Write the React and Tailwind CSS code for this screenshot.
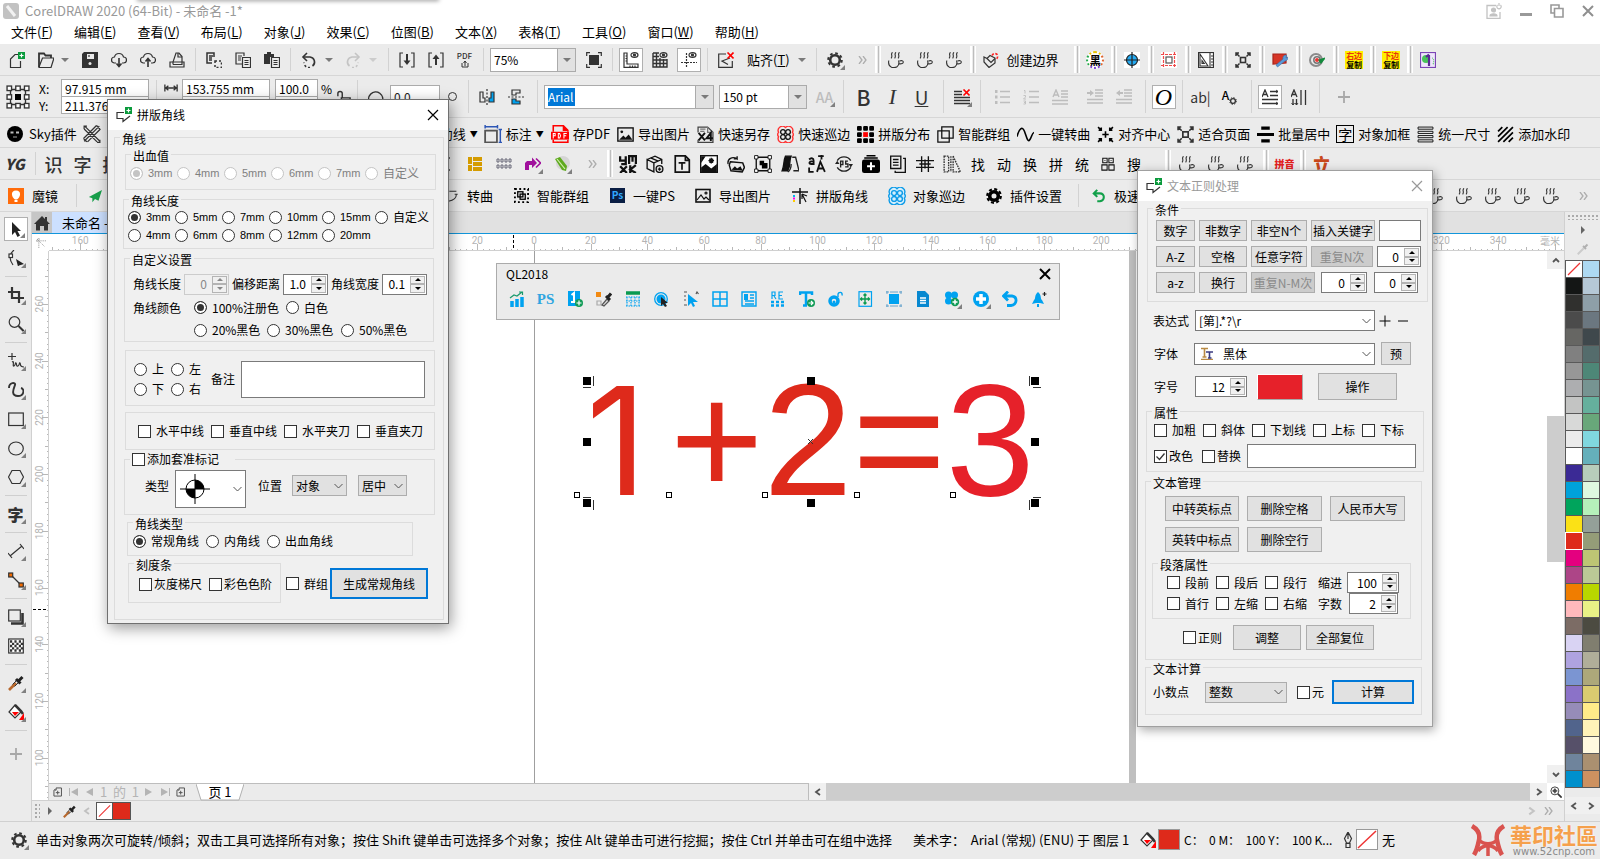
import React, { useState } from 'react';

const DARK = '#333333';
const BLUE = '#00a2f0';

/* 16x16 drawings, stroked by default */
const ICONS = {
  newDoc: <><path d="M9 2.500H6L1.500 7v8.500h10V9" /><rect x="9" y="0" width="7" height="7" fill="#0a9a3c" stroke="none" /><path d="M12.500 1.500v4M10.500 3.500h4" stroke="#fff" /></>,
  open: <><path d="M1 15V1.500h5l1.500 2H13V6" strokeWidth="1.800" /><path d="M1 15L4.500 6H16l-3 9.500H1z" /></>,
  save: <><path d="M0 2l2-2h14v16H0z" fill={DARK} stroke="none" /><rect x="5" y="2" width="7" height="5" fill="#ebebeb" stroke="none" /><path d="M7 3v2" /><circle cx="8" cy="11.500" r="1.500" fill="#ebebeb" stroke="none" /></>,
  cloudDown: <><path d="M5 11H3.500a3 3 0 0 1 0-6C4 2.500 6 1.500 8 1.500S12 3 12.500 5a3 3 0 0 1 0 6H11" /><path d="M8 6v8M5.500 11.500L8 14.500l2.500-3" strokeWidth="1.600" /></>,
  cloudUp: <><path d="M5 11H3.500a3 3 0 0 1 0-6C4 2.500 6 1.500 8 1.500S12 3 12.500 5a3 3 0 0 1 0 6H11" /><path d="M8 7v8M5.500 9.500L8 6.500l2.500 3" strokeWidth="1.600" /></>,
  print: <><path d="M1 10v5h14v-5z" /><path d="M4 12.500h9V4.500L10 1H7L4 10v2.500" /><path d="M9 1v4h4" /></>,
  cut: <><path d="M6 11H1V1h7v4M3 4h4M3 6h3M3 8h3" strokeWidth="1.500" /><path d="M9 9h6.500v6.500H9z" strokeDasharray="2 2" strokeWidth="1.500" /></>,
  copy: <><path d="M7 12H1V1h8v3M3 4h4M3 6h3M3 8h3" /><path d="M7.500 5.500h8v10h-8zM9.500 8.500h4M9.500 10.500h4M9.500 12.500h4" /></>,
  paste: <><path d="M0 2h3V0h4v2h3v3H6v7H0z" fill={DARK} stroke="none" /><path d="M7.500 5.500h8v10h-8zM9.500 8.500h4M9.500 10.500h4M9.500 12.500h4" /></>,
  undo: <><path d="M3 5h6a5 5 0 0 1 2.500 9" strokeWidth="1.600" /><path d="M6 1L2 5l4 4" strokeWidth="1.600" /><path d="M9 15.500a5 5 0 0 1-6-5" strokeDasharray="2 2" strokeWidth="1.600" /></>,
  redo: <g stroke="#c4c4c4"><path d="M13 5H7a5 5 0 0 0-2.500 9" strokeWidth="1.600" /><path d="M10 1l4 4-4 4" strokeWidth="1.600" /><path d="M7 15.500a5 5 0 0 0 6-5" strokeDasharray="2 2" strokeWidth="1.600" /></g>,
  import: <><path d="M4 1H1v14h3M12 1h3v14h-3" /><path d="M8 2v9" strokeWidth="2" /><path d="M4.500 8.500h7L8 13z" fill={DARK} stroke="none" /></>,
  export: <><path d="M4 1H1v14h3M12 1h3v14h-3" /><path d="M8 5v8" strokeWidth="2" /><path d="M4.500 7h7L8 2.500z" fill={DARK} stroke="none" /></>,
  fit: <><rect x="3" y="3" width="10" height="10" fill={DARK} stroke="none" /><path d="M.7 4V.7H4M12 .7h3.300V4M15.300 12v3.300H12M4 15.300H.7V12" /></>,
  rulers: <><path d="M1 1h3v11h11v3.300H1z" /><path d="M2.500 4H4M2.500 6.500H4M2.500 9H4M7 13.500v2M9.500 13.500v2M12 13.500v2" /><ellipse cx="11.500" cy="3" rx="3.500" ry="2.300" /><circle cx="11.500" cy="3" r="1" fill={DARK} /></>,
  grid: <><path d="M1 1v14h14V7M1 1h6M1 4.500h6M1 8h14M1 11.500h14M4.500 1v14M8 6v9M11.500 7v8" strokeWidth="1.400" /><ellipse cx="11.500" cy="3" rx="3.500" ry="2.300" /><circle cx="11.500" cy="3" r="1" fill={DARK} /></>,
  guides: <><path d="M0 10.500h16M5.500 1v15" strokeDasharray="2 1" /><ellipse cx="11.500" cy="3" rx="3.500" ry="2.300" /><circle cx="11.500" cy="3" r="1" fill={DARK} /></>,
  snapOff: <><path d="M8 2H.7v13.300h13.600V9M12 6L4 9l6 3.500" /><path d="M9.500 .5l6 6M15.500 .5l-6 6" stroke="#f00" strokeWidth="1.600" /></>,
  gear: <><circle cx="8" cy="8" r="4.800" strokeWidth="2.600" /><circle cx="8" cy="8" r="6.800" strokeWidth="2" strokeDasharray="2.670 2.670" /></>,
  gearBold: <g stroke="#000"><circle cx="8" cy="8" r="4.300" strokeWidth="3.600" /><circle cx="8" cy="8" r="6.800" strokeWidth="2.200" strokeDasharray="3 2.340" /></g>,
  cup: <g strokeWidth="1.100"><path d="M4.500 .3c-2.500 2.400 .8 3.200-1.400 6M8 .3c-2.500 2.400 .8 3.200-1.400 6M11.500 .3c-2.500 2.400 .8 3.200-1.400 6" /><path d="M.8 8.500c-.4 2 0 5.500 2.700 6.700 2 .6 4 .5 5.500-.4 1.600-1.200 2-3 2-4.800M10.500 8.500c.5 1.500 .5 2.500 .2 3.500M11.500 9c2-.8 3.800-.4 3.800 1s-1.600 2.200-4.300 1.800" /></g>,
  boundary: <><path d="M4 6.500L1 5v5l5 5.500 6-4.500V6L7 3.500z" /><path d="M4 6.500l4 4 4-4" /><path d="M9 3.500C10 1.500 12 1 13.500 2s1.500 3.500 0 5" stroke="#f22" strokeDasharray="2.500 1.500" strokeWidth="1.600" /></>,
  target: <><rect width="16" height="16" fill="#fff" stroke="none" /><circle cx="8" cy="8" r="5.500" fill="#24aaf2" stroke="#222" /><path d="M0 8h16M8 0v16" stroke="#222" /></>,
  cropMarks: <><rect width="16" height="16" fill="#fff" stroke="none" /><path d="M2.500 0v16M13.500 0v16M0 2.500h16M0 13.500h16" stroke="#f04a4a" strokeDasharray="3 1" /><rect x="5" y="5" width="6" height="6" stroke="#555" /></>,
  measure: <><rect x=".5" y=".5" width="15" height="15" fill="#fff" stroke="#333" /><path d="M2 2l8 12H2zM4 8.500v3h2.300zM12 1v14M13 4h2M13 7h2M13 10h2M13 13h2" strokeWidth="1.100" /></>,
  fitPage: <><rect x="5.500" y="5.500" width="5" height="5" strokeWidth="1.600" /><path d="M1 4V1h3M1 1l3.500 3.500M12 1h3v3M15 1l-3.500 3.500M15 12v3h-3M15 15l-3.500-3.500M4 15H1v-3M1 15l3.500-3.500" strokeWidth="1.500" /></>,
  redTool: <><path d="M1 2h13v9l-13 1z" fill="#d63527" stroke="#a8231a" /><path d="M14.500 3c-3 0-4 2-3.500 4l-7 6 1.500 2 7.500-6c2 0 3-2 3-4l-2 1z" fill="#5b9ad8" stroke="#3a6ea5" strokeWidth=".6" /></>,
  spiral: <><circle cx="7" cy="8" r="6" stroke="#8b8b8b" strokeWidth="2" /><circle cx="8" cy="8" r="3.200" stroke="#777" strokeWidth="1.500" fill="#fff" /><circle cx="8" cy="8" r="2" fill="#e33" stroke="none" /><path d="M16 6l-6 2 2 3z" fill="#128a3c" stroke="#128a3c" /></>,
  ps1: <><rect x=".5" y=".5" width="15" height="15" fill="#efe6fb" stroke="#7b45b5" /><ellipse cx="6" cy="7" rx="4" ry="4" fill="#49c35a" stroke="none" /><path d="M9 3v11M6 5l3-2.500" stroke="#5a2a94" strokeWidth="2.200" /><path d="M12 6c2 0 2 4 1 7" stroke="#58c768" strokeDasharray="1 1" /></>,
  origin: <><path d="M3 3h10v10H3z" strokeWidth=".9" /><g fill="#fff" strokeWidth=".9"><rect x=".7" y=".7" width="3" height="3" /><rect x="6.500" y=".7" width="3" height="3" /><rect x="12.300" y=".7" width="3" height="3" /><rect x=".7" y="6.500" width="3" height="3" /><rect x="12.300" y="6.500" width="3" height="3" /><rect x=".7" y="12.300" width="3" height="3" /><rect x="6.500" y="12.300" width="3" height="3" /><rect x="12.300" y="12.300" width="3" height="3" /></g><rect x="6" y="6" width="4" height="4" fill="#000" stroke="none" /></>,
  widthArrow: <path d="M1 4v8M15 4v8M2 8h12M5 5.500L2 8l3 2.500M11 5.500L14 8l-3 2.500" strokeWidth="1.500" />,
  lock: <path d="M1 7V4c0-3 5-3 5 0v5M5 9h10v6H5z" strokeWidth="1.600" />,
  rotate: <path d="M2 14A7 7 0 1 1 14 13M0 9l2 5 4-3" strokeWidth="1.500" />,
  mirrorH: <><path d="M1 3h3v6h2v4H1z" /><path d="M8 0v16" strokeDasharray="2 1.500" /><path d="M15 3h-3v6h-2v4h5z" fill={BLUE} /></>,
  mirrorV: <><path d="M12 1H4v5h4V4h4z" /><path d="M0 8h16" strokeDasharray="2 1.500" /><path d="M12 15H4v-5h4v2h4z" fill={BLUE} /></>,
  alignOff: <><path d="M0 2.500h8M0 5.500h8M0 8.500h16M0 11.500h16M0 14.500h16" strokeWidth="1.500" /><path d="M9.500 .5l6 6M15.500 .5l-6 6" stroke="#f00" strokeWidth="1.600" /></>,
  bullets: <g stroke="#bdbdbd"><path d="M6 2.500h10M6 8h10M6 13.500h10" strokeWidth="1.500" /><path d="M1 2.500h2.500M1 8h2.500M1 13.500h2.500" strokeWidth="2.800" /></g>,
  numbers: <g stroke="#bdbdbd"><path d="M6 2.500h10M6 8h10M6 13.500h10" strokeWidth="1.500" /><path d="M1 1.500h1v3M.5 6.500h2v1.500l-2 2h2.500M.5 12h2v3h-2M1 13.500h1.500" strokeWidth=".9" /></g>,
  dropCap: <g stroke="#bdbdbd"><path d="M1 8L4 1l3 7M2 6h4M9 2h7M9 5h7M9 8h7M0 11.500h16M0 15h16" strokeWidth="1.400" /></g>,
  indentIn: <g stroke="#bdbdbd"><path d="M8 1h8M8 4h8M8 7h8M0 10.500h16M0 14h16" strokeWidth="1.600" /><path d="M0 3h3V1l4 3-4 3V5H0z" fill="#bdbdbd" stroke="none" /></g>,
  indentOut: <g stroke="#bdbdbd"><path d="M8 1h8M8 4h8M8 7h8M0 10.500h16M0 14h16" strokeWidth="1.600" /><path d="M7 3H4V1L0 4l4 3V5h3z" fill="#bdbdbd" stroke="none" /></g>,
  horizText: <><path d="M0 8L3 1l3 7M1.200 5.500h3.600M8 2.500h8M8 6.500h8M0 10.500h16M0 14.500h16" strokeWidth="1.300" /><path d="M14 1l2 1.500L14 4M14 13l2 1.500-2 1.500" strokeWidth=".9" /></>,
  vertText: <><path d="M0 8L3 1l3 7M1.200 5.500h3.600M2 10v6M5.500 10v6M10 1v15M14.500 1v15" strokeWidth="1.300" /><path d="M.5 14l1.500 2 1.500-2M4 14l1.500 2L7 14" strokeWidth=".9" /></>,
  plus: <path d="M8 2v12M2 8h12" stroke="#a8a8a8" strokeWidth="1.800" />,
  face: <><circle cx="8" cy="8" r="8" fill="#000" stroke="none" /><rect x="3.500" y="5.500" width="3" height="2" fill="#bbb" stroke="none" /><rect x="9" y="5.500" width="3" height="2" fill="#bbb" stroke="none" /><path d="M6 11h4" stroke="#888" /></>,
  tools: <path d="M1.500 1L15 14.500M1 3.500L12.500 15M1 3.500V1h2.500M12.500 15.500H15V13M14.500 1L1 14.500M12 .5L.5 12M.5 12l3 3M12 .5l3 3M15.500 3.500L4 15" strokeWidth="1.100" />,
  dimension: <><path d="M1 1.500h11M1 0v3M12 0v3M14.500 4v12M13 4h3M13 15.500h3" stroke="#2d56b5" strokeWidth="1.300" /><rect x="1" y="5" width="10.500" height="10.500" stroke="#555" strokeWidth="1.600" /></>,
  pdf: <><path d="M2 6V.7h9l4 4V6M2 13v2.300h13V13" stroke="#f00" strokeWidth="1.400" /><path d="M11 .7v4h4" fill="#f00" stroke="#f00" /><rect x="0" y="6" width="16" height="7" fill="#f00" stroke="none" /><path d="M2 12V7.500h1.700v2H2M6.500 7.500v4h1.200l.8-2-.8-2zM11.500 12V7.500H14M11.500 9.500h2" stroke="#fff" strokeWidth=".9" /></>,
  picture: <><rect x=".8" y="1.800" width="14.400" height="12.400" stroke="#111" strokeWidth="1.300" /><circle cx="4.500" cy="5.500" r="1.300" fill="#111" stroke="none" /><path d="M2 13l4-4 2 2 3-3 3.500 5z" fill="#111" stroke="none" /></>,
  x4: <><path d="M1 6V1h9l5 5v9.500H1V13" stroke="#444" /><path d="M3 3h5M3 5h4M10 1v5h5" stroke="#777" /><path d="M1.500 6.500l6 7M7.500 6.500l-6 7M13 14V6.500L9 11.500h6" stroke="#111" strokeWidth="1.800" /></>,
  clover: <><path d="M8 1.500a4 4 0 0 1 6.500 4.500 3 3 0 0 1 0 4A4 4 0 0 1 8 14.500 4 4 0 0 1 1.500 10a3 3 0 0 1 0-4A4 4 0 0 1 8 1.500z" stroke="#f33" strokeWidth="1.300" /><g stroke="#111" strokeWidth="1.200"><circle cx="5.600" cy="5.600" r="2.200" /><circle cx="10.400" cy="5.600" r="2.200" /><circle cx="5.600" cy="10.400" r="2.200" /><circle cx="10.400" cy="10.400" r="2.200" /></g></>,
  cloverBlue: <g stroke="#0d9be8" strokeWidth="1.200"><path d="M8 1.500a4 4 0 0 1 6.500 4.500 3 3 0 0 1 0 4A4 4 0 0 1 8 14.500 4 4 0 0 1 1.500 10a3 3 0 0 1 0-4A4 4 0 0 1 8 1.500z" fill="#d5effc" /><circle cx="5.400" cy="5.400" r="2.200" /><circle cx="10.600" cy="5.400" r="2.200" /><circle cx="5.400" cy="10.600" r="2.200" /><circle cx="10.600" cy="10.600" r="2.200" /></g>,
  dots9: <g stroke="none" fill="#000"><rect x="0" y="0" width="4.500" height="4.500" rx="1" /><rect x="5.800" y="0" width="4.500" height="4.500" rx="1" /><rect x="11.500" y="0" width="4.500" height="4.500" rx="1" /><rect x="0" y="5.800" width="4.500" height="4.500" rx="1" /><rect x="5.800" y="5.800" width="4.500" height="4.500" fill="#f00" /><rect x="11.500" y="5.800" width="4.500" height="4.500" rx="1" /><rect x="0" y="11.500" width="4.500" height="4.500" rx="1" /><rect x="5.800" y="11.500" width="4.500" height="4.500" rx="1" /><rect x="11.500" y="11.500" width="4.500" height="4.500" rx="1" /></g>,
  group: <path d="M4.500 .8h10.700v10.700H4.500zM.8 4.500h10.700v10.700H.8z" stroke="#111" />,
  wave: <path d="M0 10C2 2 5 0 7 5s3 11 5 8 2-6 4-7" stroke="#000" strokeWidth="1.500" />,
  center: <path d="M8 5v6M5 8h6M1 1l3 3M4 1.500V4H1.500M15 1l-3 3M12 1.500V4h2.500M1 15l3-3M1.500 12H4v2.500M15 15l-3-3M12 14.500V12h2.500" stroke="#000" strokeWidth="1.500" />,
  batch: <path d="M4 2h8M0 8h16M4 14h8" stroke="#000" strokeWidth="3" />,
  lines4: <path d="M1 1h14v2H1zM1 5h14v2H1zM1 9h14v2H1zM1 13h14v2H1z" stroke="#111" strokeWidth=".9" />,
  hatch: <path d="M1 5l4-4M1 10l9-9M1 15L15 1M6 15l9-9M11 15l4-4" stroke="#000" strokeWidth="1.600" />,
  spacing: <path d="M0 2h12M0 14h12M6 4v8M4 6l2-2 2 2M4 10l2 2 2-2" stroke="#444" strokeWidth="1.500" />,
  yellowGrid: <g fill="#d49b00" stroke="none"><rect x="1" y="1" width="4" height="7" /><rect x="1" y="9" width="4" height="6" /><rect x="6" y="1" width="9" height="4" /><rect x="6" y="6" width="9" height="4" /><rect x="6" y="11" width="9" height="4" /></g>,
  smallGrid: <path d="M1 3h2v3H1zM5 3h2v3H5zM9 3h2v3H9zM13 3h2v3h-2zM1 9h2v3H1zM5 9h2v3H5zM9 9h2v3H9zM13 9h2v3h-2z" stroke="#667" strokeWidth="1" />,
  purpleArrow: <><path d="M0 14V7l2-2h5V1.500L12 7l-5 5V9H4v5z" fill="#a0109c" stroke="none" /><path d="M11 2.500L15.500 7 11 11.500" stroke="#a0109c" strokeWidth="1.600" /></>,
  corel: <><circle cx="9" cy="7" r="7" fill="#d5d5d5" stroke="none" /><path d="M1 3l5-2 7 9-1 5-4-1z" fill="#5eaa1e" stroke="none" /><path d="M3 3l8 10" stroke="#d7f0b5" strokeWidth="1.200" /></>,
  ymxk: <path d="M1 1v4h5M6 1v7H2M9 8V1h6v7M12 1v5M1 10l6 6M7 10l-6 6M10 9v7M15 9l-5 4 5 3" stroke="#111" strokeWidth="2" />,
  box: <><path d="M1 4l7-3 6 3v4M1 4v8l6 3V7zM7 7l7-3M4 2.500l7 3" stroke="#111" /><circle cx="12" cy="12.500" r="3" stroke="#111" /><path d="M12 11v3M10.500 12.500h3" stroke="#111" /></>,
  docT: <path d="M2 .8h9l3.500 3.500v11H2zM11 .8v4h3M5 7h6M8 7v6" stroke="#111" strokeWidth="1.500" />,
  night: <><rect x=".6" y=".6" width="14.800" height="14.800" fill="#fff" stroke="#111" /><path d="M1 15V11l4-3 5 4 5-4v7zM1 1h4L1 7z" fill="#111" stroke="none" /><path d="M10 2.500v5M7.500 5h5M8.300 3.300l3.400 3.400M11.700 3.300L8.300 6.700" stroke="#111" /></>,
  rotatePic: <><path d="M3 6l11 1 1.500 4-2 4-10-1-1.500-5z" stroke="#111" strokeWidth="1.300" /><path d="M4 13l3-3 2 2 3-2 2 4z" fill="#111" stroke="none" /><path d="M1 8C0 3 5 1 9 3.500l0-2.500M9 3.500H6" stroke="#111" /></>,
  nodesBox: <><path d="M2 2h12v12H2z" stroke="#111" /><path d="M.5 .5h3v3h-3zM12.500 .5h3v3h-3zM.5 12.500h3v3h-3zM12.500 12.500h3v3h-3z" fill="#fff" stroke="#111" strokeWidth=".8" /><path d="M5 5h4v2h3v5H7V9H5z" fill="#000" stroke="none" /></>,
  flag: <><path d="M1 14C3 10 2 5 4 1h5c-2 4 0 8-3 13z" fill="#111" stroke="#111" /><path d="M10 2h3l3 12h-5M9 8c0 3-1 6-3 7" stroke="#222" /></>,
  aA: <path d="M1 4c2-2 4-1 4 1v3H3c-3 0-2-3 2-2M9 1h5M12 0v4M8 15l3-9 4 9M9 12h5M1 11v4h4" stroke="#111" strokeWidth="1.600" />,
  psCycle: <><path d="M2 5A7 7 0 0 1 14 5M14 11A7 7 0 0 1 2 11" stroke="#222" /><path d="M0 8l2-3 2 3zM16 8l-2 3-2-3z" fill="#222" stroke="none" /><path d="M5 11V5.500h2v3H5M11.500 5.500H9.500v2.500h2v2.500H9" stroke="#222" strokeWidth="1.200" /></>,
  addBox: <><rect x="0" y="4" width="16" height="12" rx="2" fill="#000" stroke="none" /><path d="M2 2.700h12M4 .7h8" stroke="#000" /><path d="M8 6.500v7M4.500 10h7" stroke="#fff" strokeWidth="1.800" /></>,
  docs: <path d="M1.500 1h9v11h-9zM12.500 3h2v12.500h-9V14M3.500 4h5M3.500 6.500h5M3.500 9h5" stroke="#111" />,
  hash: <path d="M5 1v14M11 1v14M0 5h16M0 11h16M8 4v8M3 8h10" stroke="#111" />,
  mirrorTri: <path d="M1 1v14h4V1zM7 1v14M9 1l6.500 14H9z" stroke="#333" strokeDasharray="1.500 .8" strokeWidth="1.200" />,
  blocks: <path d="M2 1.500h5v5H2zM9 1.500h5v5H9zM1 9h6v6H1zM9 9h6v6H9zM4 4h1M11 4h1" stroke="#111" />,
  balloon: <><rect width="16" height="16" fill="#ff6b0a" stroke="none" /><path d="M8 2.500c-6 0-4.500 7-1 9h2c3.500-2 5-9-1-9z" fill="#fff" stroke="none" /><rect x="6.500" y="12" width="3" height="2" fill="#fff" stroke="none" /></>,
  send: <path d="M16 1L1 9l4 1.500V15l3-3.500 4 2z" fill="#19a04c" stroke="none" />,
  curve: <path d="M1 1h3v3H1zM5 2.500h8M1 12h3v3H1zM4 14c6-1 9-4 9-8M11 6h3.500" />,
  smartGroup: <><path d="M1 1h14v14H1z" strokeDasharray="2 2.600" strokeWidth="2" stroke="#000" /><rect x="4" y="4" width="5.500" height="5.500" stroke="#000" strokeWidth="1.400" /><rect x="6.500" y="6.500" width="5.500" height="5.500" stroke="#000" strokeWidth="1.400" /></>,
  photo: <><rect x="1" y="1.500" width="14" height="12.500" stroke="#111" strokeWidth="1.600" /><path d="M2 12l4-5 3 4 2-2 3 3" stroke="#111" /><circle cx="11" cy="5" r="1" stroke="#111" /></>,
  cornerLine: <><path d="M0 4h16M8 0v16" stroke="#111" strokeWidth="1.500" /><path d="M10 6l4 8M10 6v5M10 6l5 2" stroke="#111" /><path d="M2 7v2" stroke="#00b7f0" strokeWidth="2" /><path d="M2 9.500v2" stroke="#f0e" strokeWidth="2" /><path d="M2 12v2" stroke="#fc0" strokeWidth="2" /></>,
  undoGreen: <path d="M3 5h6c6 0 6 8 0 9H6M6 1L2 5l4 4" stroke="#12a04a" strokeWidth="2.400" />,
  pluginArrow: <><path d="M8 5.500H1v6h6v3l7-5.500" /><rect x="9" y="0" width="7" height="7" fill="#0a9a3c" stroke="none" /><path d="M12.500 1.500v4M10.500 3.500h4" stroke="#fff" /></>,
  pick: <path d="M4 1v13l3-3 2.500 5 2.500-1.500L9.500 10H13z" fill="#222" stroke="none" />,
  shape: <><path d="M6 0C1 4 1 10 5 15" /><rect x="1" y="4" width="3.500" height="3.500" fill="#fff" /><path d="M8 9l8 5-5 1.500-1 1z" fill="#222" stroke="none" /></>,
  crop: <path d="M4 0v11h12M0 5h11v11" strokeWidth="2.200" />,
  zoom: <><circle cx="6.500" cy="6" r="5.300" /><path d="M10.500 10l5 5" strokeWidth="2" /></>,
  freehand: <path d="M4 0v7M0 3.500h8M4 9c3-2 0 5 2 4s1-4 2-3 0 4 2 3 1-4 2-3-1 4 4 4" />,
  artistic: <path d="M1 6C1 0 8 0 7 3S2 14 10 14c6 0 7-7 3-8" strokeWidth="1.900" />,
  rect: <rect x=".7" y="2" width="14.600" height="12.500" />,
  ellipse: <ellipse cx="8" cy="8.500" rx="7.300" ry="6.500" />,
  polygon: <path d="M4 1.500h8l3.500 6.500L12 14.500H4L.5 8z" />,
  dimTool: <path d="M2 13L14 3M0 10l4 5M12 1l4 5" />,
  connector: <><path d="M3 3l10 10" strokeWidth="1.200" /><rect x=".7" y="1" width="4" height="4" fill="#f06a00" /><rect x="11" y="11" width="4.300" height="4" fill="#f06a00" /></>,
  shadow: <><rect x=".7" y="1" width="11.600" height="11" fill="#ebebeb" /><path d="M14.500 4v10.500H3" strokeWidth="2.600" /></>,
  checker: <><rect x=".7" y="1" width="14.600" height="14" fill="#fff" /><path d="M2 3.500h12M2 8h12M2 12.500h12" strokeDasharray="2.200 2.200" strokeWidth="2.300" /><path d="M4 5.800h12M4 10.300h11" strokeDasharray="2.200 2.200" strokeWidth="2.300" /></>,
  dropper: <><path d="M1 15L8 8" stroke="#b7672c" strokeWidth="2.600" /><path d="M8.500 5.500l-4 4M10.500 7.500l-4 4" strokeWidth="1" /><path d="M8 4l4.500 4.500M10.500 6L14.500 2" stroke="#222" strokeWidth="3" /></>,
  dropperGray: <><path d="M1 15L9 7" stroke="#ccc" strokeWidth="2.500" /><path d="M8 4l4 4M10 6l4-4" stroke="#b0b0b0" strokeWidth="2.500" /></>,
  fill: <><path d="M7 1L1 8l6 6 6-6z" fill="#fff" /><path d="M4 8h7l-4 4z" fill="#f00" stroke="none" /><path d="M7 1l6 6 2 3" strokeWidth="2.500" /><path d="M16 9v7h-5z" fill="#f00" stroke="none" /></>,
  home: <path d="M0 9l8-8 3 3V2h2v4l3 3h-2v6.500h-4V11H6v4.500H2V9z" fill={DARK} stroke="none" />,
  rulerOrigin: <path d="M2 2l12 12M2 6V2h4M0 4.500h16M4.500 0v16" stroke="#888" strokeDasharray="2 1.500" />,
  pageAdd: <path d="M4 3L1.500 5.500v9h12V1.500H5V5H2M7.500 6v6M4.500 9h6" stroke="#555" strokeWidth="1.600" />,
  magnet: <><circle cx="6.500" cy="6.500" r="5.300" /><path d="M10.500 10.500l5 5" strokeWidth="2.200" /><path d="M6.500 3v7M3 6.500h7M5 5h3v3H5z" /></>,
  pen: <path d="M8 0L4.500 6.500 6.500 11h3l2-4.500zM8 1v6M6 11.500h4v4H6z" />,
  user: <g stroke="#c2c2c2"><path d="M10 2.500H1v13h13V9" strokeWidth="1.300" /><circle cx="7.500" cy="7" r="2" fill="#c2c2c2" /><path d="M4 13c0-3 7-3 7 0z" fill="#c2c2c2" /><path d="M11.500 2a2.200 2.200 0 1 0 3 0M13 0v3" /></g>,
  app: <><rect width="16" height="16" rx="3" fill="#c2c2c2" stroke="none" /><path d="M4 3l8 10" stroke="#f2f2f2" strokeWidth="3" /></>,
  qChart: <g stroke={BLUE}><path d="M3 10v6M8 8v8M13 6v10" strokeWidth="3.500" /><path d="M1 7l4-3 3 1 5-4M10 1h3.500v3" stroke="#1a9a6c" /></g>,
  qOne: <><rect x="1" y="0" width="12" height="15" fill={BLUE} stroke="none" /><path d="M4.500 4L7 2v9M4 11h6" stroke="#fff" strokeWidth="2" /><circle cx="12" cy="12" r="4" fill="#129b57" stroke="none" /><path d="M12 9.500v5M9.500 12h5" stroke="#fff" /></>,
  qPicker: <><rect x="0" y="1" width="5" height="5" fill="#f28a13" stroke="none" /><path d="M1 10h4v4H1z" stroke="#aaa" /><path d="M6 14l5-6 2 2-5 5z" fill="#ddd" stroke="#555" /><path d="M10 5l4 4M12 6l3-3.500" stroke="#222" strokeWidth="3" /></>,
  qTable: <><path d="M1 2h14" stroke="#0a9a50" strokeWidth="3.500" /><path d="M1 6h14M1 10h14M1 15h14M2 6v9M6 6v9M10 6v9M14 6v9" stroke={BLUE} strokeDasharray="1.500 1" /></>,
  qTarget: <><circle cx="7" cy="8" r="6.300" stroke={BLUE} strokeWidth="1.300" /><circle cx="7" cy="8" r="4.500" fill={BLUE} stroke="none" /><path d="M7 6v9l2-2 2 3 2-1-2-3h3z" fill="#222" stroke="none" /></>,
  qCursor: <><path d="M5 3v12l3-3 2 4 2-1-2-4h5z" fill={BLUE} stroke="none" /><path d="M1 1h3M1 5h2M1 9h2M1 14h3M13 3l1-2 1.500 2" stroke="#555" /></>,
  qWindow: <path d="M1 1h14v14H1zM8 1v14M1 8h14" stroke={BLUE} strokeWidth="1.500" />,
  qNews: <g stroke={BLUE}><path d="M1 1h14v14H1zM9 4h4M9 7h4M4 10h9M4 13h9" strokeWidth="1.400" /><rect x="3" y="3" width="4" height="6" fill={BLUE} stroke="none" /></g>,
  qRe: <g stroke={BLUE}><path d="M2 8V1h3v3.500H2M4 5l2 3M13 1H9v7h4M9 4.500h3" strokeWidth="1.200" /><path d="M1 11h3M6 11h3M11 11h3M1 14.500h3M6 14.500h3M11 14.500h3" strokeWidth="2.500" /></g>,
  qT: <><path d="M1 4V1.500h12V4M7 2v12M4 14.500h4" stroke={BLUE} strokeWidth="2.500" /><circle cx="12" cy="12" r="4" fill="#129b57" stroke="none" /><path d="M9.500 12h4.500M12 10l2 2-2 2" stroke="#fff" /></>,
  qFlame: <><circle cx="6" cy="10" r="4" stroke={BLUE} strokeWidth="3.500" /><circle cx="6" cy="11" r="1.500" fill={BLUE} stroke="none" /><path d="M10 6V3.500c0-3 5-3 4 1" stroke={BLUE} strokeWidth="1.400" /></>,
  qMove: <><rect x="2" y=".7" width="12.500" height="14.600" stroke={BLUE} /><path d="M8 3v10M3.500 8h9M6.500 4.500L8 3l1.500 1.500M6.500 11.500L8 13l1.500-1.500M5 6.500L3.500 8 5 9.500M11 6.500L12.500 8 11 9.500" stroke="#0a9a50" strokeWidth="1.400" /></>,
  qSelect: <><rect x="3" y="3" width="10" height="10" fill={BLUE} stroke="none" /><path d="M0 0h2v2H0zM14 0h2v2h-2zM0 14h2v2H0zM14 14h2v2h-2zM4 1h8M4 15h8" stroke="#5a9cc8" strokeWidth=".9" /></>,
  qDoc: <><path d="M2 0h8l4 4v12H2z" fill="#0788d0" stroke="none" /><path d="M5 7h6M5 9.500h6M5 12h6" stroke="#fff" strokeWidth="1.300" /></>,
  qFlower: <><g fill={BLUE} stroke="none"><circle cx="4.500" cy="4" r="3.500" /><circle cx="10.500" cy="4" r="3.500" /><circle cx="4.500" cy="10" r="3.500" /></g><circle cx="11" cy="11" r="4.200" fill="#129b57" stroke="none" /><path d="M11 8.500v5M8.500 11h5" stroke="#fff" strokeWidth="1.500" /></>,
  qPlus: <><circle cx="8" cy="8" r="8" fill={BLUE} stroke="none" /><path d="M8 3v10M3 8h10" stroke="#fff" strokeWidth="3.500" /></>,
  qUndo: <path d="M2 5h8c6 1 5 9-1 9.500H5M6 .5L1.500 5 6 9.500" stroke={BLUE} strokeWidth="2.800" />,
  qRocket: <><path d="M7 1C3 4 5 8 3 9l-2 4 4-1h4l4 1-2-4C9 8 11 4 7 1z" fill={BLUE} stroke="none" /><path d="M7 13v3" stroke={BLUE} strokeWidth="2" /><path d="M13.500 1v4M11.500 3h4" stroke="#222" /></>,
};

function Icon({ name, className = 'w-4 h-4' }) {
  return (
    <svg viewBox="0 0 16 16" className={`${className} shrink-0`} fill="none" stroke={DARK} strokeWidth="1.200" aria-hidden="true">
      {ICONS[name]}
    </svg>
  );
}

function Corner() {
  return (
    <svg viewBox="0 0 5 5" className="absolute right-[2px] bottom-[2px] w-[5px] h-[5px]" aria-hidden="true">
      <path d="M5 0v5H0z" fill="#808080" />
    </svg>
  );
}

/* 29px toolbar cell */
function Tool({ name, boxed, corner, children, label }) {
  return (
    <div className="w-[29px] h-[29px] shrink-0 flex items-center justify-center">
      <button
        aria-label={label || name}
        className={`relative w-6 h-6 flex items-center justify-center ${boxed ? 'bg-white border border-[#b0b0b0]' : ''}`}
      >
        {children || <Icon name={name} />}
        {corner && <Corner />}
      </button>
    </div>
  );
}

const Sep = () => <div className="w-2 h-full shrink-0 flex justify-center py-1"><div className="w-px h-full bg-[#d2d2d2]" /></div>;

const Grip = () => (
  <div className="w-2 shrink-0 flex justify-center gap-px h-[27px]">
    <div className="w-[2px] bg-white" />
    <div className="w-px bg-[#bdbdbd]" />
    <div className="w-px bg-white" />
  </div>
);

const Down = ({ light }) => (
  <svg viewBox="0 0 8 4" className="w-2 h-1 shrink-0" aria-hidden="true"><path d="M0 0h8L4 4z" fill={light ? '#cccccc' : '#7a7a7a'} /></svg>
);

const More = () => (
  <svg viewBox="0 0 9 8" className="w-[9px] h-2 shrink-0" fill="none" stroke="#adadad" strokeWidth="1.300" aria-hidden="true"><path d="M1 0l3 4-3 4M5 0l3 4-3 4" /></svg>
);

const Chevron = ({ dir = 'down', color = '#555', className = 'w-2 h-2' }) => {
  const d = { down: 'M1 3l3 3 3-3', up: 'M1 6l3-3 3 3', left: 'M6 1L2 4l4 3', right: 'M2 1l4 3-4 3' }[dir];
  return <svg viewBox="0 0 8 8" className={`${className} shrink-0`} fill="none" stroke={color} strokeWidth="1.800" aria-hidden="true"><path d={d} /></svg>;
};

function ToolRow({ className, children }) {
  return <div className={`flex items-center shrink-0 border-b border-[#d6d6d6] overflow-hidden whitespace-nowrap ${className}`}>{children}</div>;
}

/* Combo box of the main toolbars */
function Combo({ label, value, className, selected }) {
  const [text, setText] = useState(value);
  return (
    <div className={`flex h-6 shrink-0 border border-[#ababab] bg-white ${className}`}>
      <div className="flex-1 min-w-0 flex items-center px-[3px]">
        <input
          aria-label={label}
          value={text}
          size={Math.max(text.length, 1)}
          onChange={(e) => setText(e.target.value)}
          className={`min-w-0 h-[18px] text-xs leading-[18px] outline-none ${selected ? 'bg-[#0078d7] text-white w-[27px]' : 'w-full'}`}
        />
      </div>
      <button aria-label={`${label} ▾`} className="w-[18px] bg-[#e1e1e1] border-l border-[#ababab] flex items-center justify-center"><Down /></button>
    </div>
  );
}

function Field({ label, value, className }) {
  return <input aria-label={label} defaultValue={value} className={`border border-[#ababab] bg-white px-[3px] text-xs outline-none shrink-0 ${className}`} />;
}

const MENUS = [
  ['文件', 'F'], ['编辑', 'E'], ['查看', 'V'], ['布局', 'L'], ['对象', 'J'], ['效果', 'C'],
  ['位图', 'B'], ['文本', 'X'], ['表格', 'T'], ['工具', 'O'], ['窗口', 'W'], ['帮助', 'H'],
];

function Header() {
  return (
    <header className="relative bg-white shrink-0">
      <div className="absolute left-[137px] -top-1 w-[302px] h-1 shadow-[0_1px_4px_rgba(0,0,0,0.4)]" />
      <div className="h-[22px] flex items-center pl-[3px] pr-[6px]">
        <Icon name="app" />
        <span className="ml-[6px] text-[#999] leading-5">CorelDRAW 2020 (64-Bit) - 未命名 -1*</span>
        <div className="ml-auto flex items-center gap-[18px]">
          <button aria-label="用户"><Icon name="user" /></button>
          <button aria-label="最小化" className="w-[12px] h-[10px] border-b-[3px] border-[#999]" />
          <button aria-label="还原">
            <svg viewBox="0 0 14 14" className="w-[14px] h-[14px]" fill="none" stroke="#999" strokeWidth="1.600"><path d="M4 9H1V1h8v3M4.500 4.500H13V13H4.500z" /></svg>
          </button>
          <button aria-label="关闭">
            <svg viewBox="0 0 12 12" className="w-3 h-3" fill="none" stroke="#8f8f8f" strokeWidth="2"><path d="M1 1l10 10M11 1L1 11" /></svg>
          </button>
        </div>
      </div>
      <nav className="h-[22px] flex items-center gap-[21px] pl-[11px] pb-[2px]">
        {MENUS.map(([text, key]) => (
          <button key={text} className="leading-5 whitespace-nowrap">{text}(<u>{key}</u>)</button>
        ))}
      </nav>
    </header>
  );
}

const Cups = () => <>{[0, 1, 2].map((i) => <Tool key={i} name="cup" label={`宏 ${i + 1}`} />)}</>;

function CopyBadge({ top, bottom }) {
  return (
    <span className="w-[18px] h-[18px] shrink-0 bg-[#fff000] flex flex-col items-center justify-center text-[8px] leading-[9px] font-bold whitespace-nowrap">
      <span className="text-[#e8350c]">{top}</span>
      <span>{bottom}</span>
    </span>
  );
}

function StandardBar() {
  const extras = ['target', 'cropMarks', 'measure', 'fitPage', 'redTool', 'spiral'];
  return (
    <ToolRow className="h-8 pl-[2px]">
      <Tool name="newDoc" />
      <Tool name="open" />
      <button aria-label="打开 ▾" className="w-[15px] shrink-0 pl-px"><Down /></button>
      {['save', 'cloudDown', 'cloudUp', 'print'].map((n) => <Tool key={n} name={n} />)}
      <Sep />
      {['cut', 'copy', 'paste'].map((n) => <Tool key={n} name={n} />)}
      <Sep />
      <Tool name="undo" />
      <button aria-label="撤销 ▾" className="w-[15px] shrink-0 pl-[2px]"><Down /></button>
      <Tool name="redo" />
      <button aria-label="重做 ▾" className="w-[17px] shrink-0 pl-[2px]"><Down light /></button>
      <Sep />
      <Tool name="import" />
      <Tool name="export" />
      <Tool label="发布为 PDF">
        <span className="flex flex-col items-center text-[8px] leading-[8px] font-medium text-[#333]">
          PDF
          <svg viewBox="0 0 8 8" className="w-2 h-2" fill="none" stroke={DARK}><path d="M1 3v4h6V3M4 6V1M2.500 3L4 1l1.500 2" /></svg>
        </span>
      </Tool>
      <Sep />
      <div className="w-[3px] shrink-0" />
      <Combo label="缩放级别" value="75%" className="w-[86px]" />
      <div className="w-[3px] shrink-0" />
      <Tool name="fit" />
      <Sep />
      <Tool name="rulers" boxed />
      <Tool name="grid" />
      <Tool name="guides" boxed />
      <Sep />
      <Tool name="snapOff" />
      <button className="flex items-center gap-2 px-[7px] shrink-0">
        <span className="leading-5">贴齐(<u>T</u>)</span>
        <Down />
      </button>
      <Sep />
      <Tool name="gear" corner />
      <button aria-label="更多" className="w-6 shrink-0 pl-2"><More /></button>
      <Grip />
      <Cups />
      <Grip />
      <button className="flex items-center gap-2 pl-[6px] pr-[14px] shrink-0">
        <Icon name="boundary" />
        <span className="leading-5">创建边界</span>
      </button>
      <Grip />
      <Tool label="黑">
        <span className="w-[18px] h-[18px] shrink-0 rounded-full border-2 border-dotted border-[#e0602a] border-t-[#e6c200] border-b-[#7a3fd0] border-l-[#22a84a] bg-white flex items-center justify-center text-[11px] leading-3 font-bold">黑</span>
      </Tool>
      {extras.map((n) => (
        <React.Fragment key={n}>
          <Grip />
          <Tool name={n} />
        </React.Fragment>
      ))}
      <Grip />
      <Tool label="右边复制"><CopyBadge top="右边" bottom="复制" /></Tool>
      <Grip />
      <Tool label="下边复制"><CopyBadge top="下边" bottom="复制" /></Tool>
      <Grip />
      <Tool name="ps1" />
    </ToolRow>
  );
}

function PropertyBar() {
  return (
    <ToolRow className="h-[42px] pl-[6px]">
      <Icon name="origin" className="w-6 h-6" />
      <div className="flex flex-col ml-[9px] w-[22px] text-xs leading-[17px] shrink-0">
        <span>X:</span>
        <span>Y:</span>
      </div>
      <div className="flex flex-col shrink-0 -space-y-px">
        <Field label="X" value="97.915 mm" className="w-[88px] h-[18px]" />
        <Field label="Y" value="211.376 mm" className="w-[88px] h-[18px]" />
      </div>
      <div className="w-[3px] shrink-0" />
      <Sep />
      <div className="flex flex-col gap-1 w-[22px] pl-1 shrink-0">
        <Icon name="widthArrow" className="w-[14px] h-[14px]" />
        <span className="h-[14px]" />
      </div>
      <div className="flex flex-col shrink-0 -space-y-px">
        <Field label="宽度" value="153.755 mm" className="w-[88px] h-[18px]" />
        <Field label="高度" value="" className="w-[88px] h-[18px]" />
      </div>
      <div className="flex flex-col shrink-0 -space-y-px ml-[5px]">
        <Field label="水平缩放" value="100.0" className="w-[43px] h-[18px]" />
        <Field label="垂直缩放" value="" className="w-[43px] h-[18px]" />
      </div>
      <span className="self-start mt-1 ml-[3px] w-4 leading-[18px] text-xs shrink-0">%</span>
      <Icon name="lock" className="w-[14px] h-[14px]" />
      <div className="w-[2px] shrink-0" />
      <Sep />
      <Tool name="rotate" />
      <Field label="旋转角度" value="0.0" className="w-[50px] h-6 text-[#222]" />
      <span className="w-[24px] flex justify-center shrink-0"><span className="w-[9px] h-[9px] rounded-full border border-[#333]" /></span>
      <Sep />
      <Tool name="mirrorH" />
      <Tool name="mirrorV" />
      <div className="w-[3px] shrink-0" />
      <Sep />
      <div className="w-[3px] shrink-0" />
      <Combo label="字体列表" value="Arial" selected className="w-[170px]" />
      <div className="w-[5px] shrink-0" />
      <Combo label="字体大小" value="150 pt" className="w-[88px]" />
      <div className="w-[3px] shrink-0" />
      <Tool label="可变字体" corner><span className="text-[14px] leading-4 text-[#bdbdbd] font-medium">AA</span></Tool>
      <Sep />
      <div className="w-[2px] shrink-0" />
      <Tool label="粗体"><b className="text-[21px] leading-6 font-medium text-[#333]">B</b></Tool>
      <Tool label="斜体"><i className="text-[22px] leading-6 font-['Liberation_Serif',serif] text-[#333]">I</i></Tool>
      <Tool label="下划线"><u className="text-[19px] leading-6 text-[#333]">U</u></Tool>
      <div className="w-[3px] shrink-0" />
      <Sep />
      <Tool name="alignOff" corner />
      <Sep />
      <div className="w-[3px] shrink-0" />
      <Tool name="bullets" />
      <Tool name="numbers" />
      <Tool name="dropCap" />
      <div className="w-[6px] shrink-0" />
      <Tool name="indentIn" />
      <Tool name="indentOut" />
      <div className="w-[3px] shrink-0" />
      <Sep />
      <Tool label="OpenType" boxed><i className="text-[24px] leading-6 font-['Liberation_Serif',serif]">O</i></Tool>
      <Sep />
      <Tool label="编辑文本"><span className="text-sm leading-5 text-[#333]">ab|</span></Tool>
      <Tool label="文本属性">
        <span className="flex text-[12px] leading-3 font-medium">A<Icon name="gear" className="w-2 h-2 mt-2" /></span>
      </Tool>
      <div className="w-[3px] shrink-0" />
      <Sep />
      <Tool name="horizText" boxed />
      <Tool name="vertText" />
      <div className="w-[2px] shrink-0" />
      <Sep />
      <div className="w-[6px] shrink-0" />
      <Tool name="plus" />
    </ToolRow>
  );
}

const SKY = [
  ['picture', '导出图片'], ['x4', '快速另存'], ['clover', '快速巡边'], ['dots9', '拼版分布'],
  ['group', '智能群组'], ['wave', '一键转曲'], ['center', '对齐中心'], ['fitPage', '适合页面'],
  ['batch', '批量居中'], [null, '对象加框'], ['lines4', '统一尺寸'], ['hatch', '添加水印'],
];

function SkyBar() {
  return (
    <ToolRow className="h-[30px] pl-[7px] pt-[3px]">
      <button className="flex items-center gap-[6px] shrink-0"><Icon name="face" />Sky插件</button>
      <button aria-label="设计工具" className="ml-[6px]"><Icon name="tools" className="w-[18px] h-[18px]" /></button>
      <div className="w-[326px] shrink-0" />
      <button className="flex items-center gap-1 shrink-0">辅助线<span className="text-[8px]">▼</span></button>
      <button className="ml-[6px] flex items-center gap-1 shrink-0">
        <Icon name="dimension" className="w-[18px] h-[18px]" />标注<span className="text-[8px]">▼</span>
      </button>
      <button className="ml-[7px] flex items-center gap-1 shrink-0"><Icon name="pdf" className="w-[18px] h-[18px]" />存PDF</button>
      {SKY.map(([icon, text]) => (
        <button key={text} className="ml-[6px] flex items-center gap-1 shrink-0">
          {icon
            ? <span className="w-[18px] flex justify-center"><Icon name={icon} className="w-[17px] h-[17px]" /></span>
            : <span className="w-[18px] h-[18px] border border-black text-[14px] leading-4 text-center">字</span>}
          {text}
        </button>
      ))}
    </ToolRow>
  );
}

const YG_ICONS = ['ymxk', 'box', 'docT', 'night', 'rotatePic', 'nodesBox', 'flag', 'aA', 'psCycle', 'addBox', 'docs', 'hash', 'mirrorTri'];

function YgBar() {
  return (
    <ToolRow className="h-8 pl-[5px]">
      <i className="w-[26px] text-[15px] font-black text-[#333] shrink-0">YG</i>
      <Sep />
      {['识', '字', '拼'].map((t) => (
        <button key={t} className="w-[29px] text-[18px] leading-6 font-medium text-[#333] shrink-0">{t}</button>
      ))}
      <div className="w-[305px] shrink-0" />
      <Tool name="spacing" />
      <Tool name="yellowGrid" />
      <Tool name="smallGrid" />
      <Tool name="purpleArrow" corner />
      <Tool name="corel" corner />
      <button aria-label="更多" className="w-[30px] shrink-0 pl-3"><More /></button>
      <Grip />
      {YG_ICONS.map((n) => (
        <button key={n} aria-label={n} className="w-[27px] flex justify-center shrink-0"><Icon name={n} className="w-[18px] h-[18px]" /></button>
      ))}
      {['找', '动', '换', '拼', '统'].map((t) => <button key={t} className="w-[26px] text-[14px] leading-6 shrink-0">{t}</button>)}
      <button aria-label="排列" className="w-[26px] flex justify-center shrink-0"><Icon name="blocks" className="w-[14px] h-[14px]" /></button>
      <button className="w-[26px] text-[14px] leading-6 shrink-0">搜</button>
      <div className="w-[17px] shrink-0" />
      <Grip />
      <Cups />
      <div className="w-[3px] shrink-0" />
      <Grip />
      <Tool label="拼音"><b className="text-[10px] leading-5 text-[#e2201e] font-black whitespace-nowrap">拼音</b></Tool>
      <Grip />
      <Tool label="立"><b className="text-[18px] leading-5 font-black text-[#c8481c]">立</b></Tool>
    </ToolRow>
  );
}

function MirrorBar() {
  return (
    <ToolRow className="h-8 pl-2">
      <button className="flex items-center gap-2 shrink-0"><Icon name="balloon" />魔镜</button>
      <div className="w-[14px] shrink-0" />
      <Sep />
      <div className="w-[8px] shrink-0" />
      <Icon name="send" className="w-[14px] h-[14px]" />
      <div className="w-[343px] shrink-0" />
      <button className="flex items-center gap-2 shrink-0"><Icon name="curve" className="w-[14px] h-[14px]" />转曲</button>
      <button className="ml-[21px] flex items-center gap-2 shrink-0"><Icon name="smartGroup" className="w-[15px] h-[15px]" />智能群组</button>
      <button className="ml-[21px] flex items-center gap-2 shrink-0">
        <span className="w-[15px] h-[15px] bg-[#0a1e44] text-[#31a8ff] text-[10px] leading-[14px] font-bold text-center">Ps</span>
        一键PS
      </button>
      <button className="ml-[20px] flex items-center gap-2 shrink-0"><Icon name="photo" />导出图片</button>
      <button className="ml-[21px] flex items-center gap-2 shrink-0"><Icon name="cornerLine" />拼版角线</button>
      <button className="ml-5 flex items-center gap-[7px] shrink-0"><Icon name="cloverBlue" className="w-[18px] h-[18px]" />对象巡边</button>
      <button className="ml-[21px] flex items-center gap-2 shrink-0"><Icon name="gearBold" />插件设置</button>
      <div className="w-[13px] shrink-0" />
      <Sep />
      <button className="ml-[9px] flex items-center gap-2 shrink-0"><Icon name="undoGreen" className="w-[14px] h-[14px]" />极速</button>
      <div className="ml-auto flex items-center shrink-0 pr-3">
        <Tool name="cup" label="宏 4" />
        <Tool name="cup" label="宏 5" />
        <Cups />
        <div className="w-[14px]" />
        <button aria-label="更多"><More /></button>
      </div>
    </ToolRow>
  );
}

const TOOLBOX = [
  ['shape', 1], null, ['crop', 1], ['zoom', 1], null, ['freehand', 1], ['artistic', 1], ['rect', 1], ['ellipse', 1], ['polygon', 1],
  null, ['text', 1], null, ['dimTool', 1], ['connector', 1], null, ['shadow', 1], ['checker', 0], null, ['dropper', 1], ['fill', 1], null,
];

function Toolbox() {
  return (
    <aside className="w-8 shrink-0 border-r border-[#d0d0d0] flex flex-col items-center pt-[2px]">
      <Tool name="pick" boxed corner />
      {TOOLBOX.map((t, i) =>
        t ? (
          <Tool key={t[0]} name={t[0]} corner={!!t[1]}>
            {t[0] === 'text' ? <b className="text-[16px] leading-5 font-black text-[#333]">字</b> : undefined}
          </Tool>
        ) : (
          <div key={i} className="h-2 w-[22px] flex items-center shrink-0"><div className="h-px w-full bg-[#cfcfcf]" /></div>
        )
      )}
      <div className="h-10 flex items-center"><Tool name="plus" /></div>
    </aside>
  );
}

const PX_PER_MM = 2.8357;
const H_LABELS = [-160, -20, 0, 20, 40, 60, 80, 100, 120, 140, 160, 180, 200, 320, 340];

function HorizontalRuler() {
  const marks = [];
  for (let mm = -170; mm <= 378; mm += 2) marks.push(mm);
  return (
    <div className="flex-1 min-w-0 relative bg-white border-b border-[#d0d0d0]">
      <svg className="w-full h-4 block font-['Roboto',sans-serif]" stroke="#b8b8b8" aria-hidden="true">
        {marks.map((mm) => {
          const x = Math.round(485 + mm * PX_PER_MM) + 0.5;
          const top = mm % 20 === 0 ? 10 : mm % 10 === 0 ? 13 : 15;
          return <path key={mm} d={`M${x} ${top}V16`} />;
        })}
        {H_LABELS.map((mm) => (
          <text key={mm} x={485 + mm * PX_PER_MM} y="10" textAnchor="middle" fontSize="10" fill="#b4b4b4" stroke="none">{Math.abs(mm)}</text>
        ))}
        <path d="M464.500 1v15" stroke="#000" strokeDasharray="3 2" />
      </svg>
      <span className="absolute right-1 top-0 text-[10px] leading-[14px] text-[#b4b4b4]">毫米</span>
    </div>
  );
}

function VerticalRuler() {
  const marks = [];
  for (let mm = 276; mm >= 86; mm -= 2) marks.push(mm);
  return (
    <div className="w-[17px] shrink-0 bg-white border-r border-[#d0d0d0] relative">
      <svg className="absolute inset-0 w-4 h-full font-['Roboto',sans-serif]" stroke="#b8b8b8" aria-hidden="true">
        {marks.map((mm) => {
          const y = Math.round(53 + (260 - mm) * PX_PER_MM) + 0.5;
          const left = mm % 20 === 0 ? 10 : mm % 10 === 0 ? 13 : 15;
          return <path key={mm} d={`M${left} ${y}H16`} />;
        })}
        {marks.filter((mm) => mm % 20 === 0).map((mm) => (
          <text key={mm} transform={`translate(11 ${53 + (260 - mm) * PX_PER_MM}) rotate(-90)`} textAnchor="middle" fontSize="10" fill="#b4b4b4" stroke="none">{mm}</text>
        ))}
        <path d="M1 358.500h15" stroke="#000" strokeDasharray="3 2" />
      </svg>
    </div>
  );
}

const HANDLES = [
  'left-[534px] top-[126px]', 'left-[758px] top-[126px]', 'left-[982px] top-[126px]',
  'left-[534px] top-[187px]', 'left-[982px] top-[187px]',
  'left-[534px] top-[248px]', 'left-[758px] top-[248px]', 'left-[982px] top-[248px]',
];
const NODES = ['left-[525px]', 'left-[617px]', 'left-[713px]', 'left-[805px]', 'left-[901px]'];

function Artboard() {
  return (
    <div className="flex-1 min-w-0 relative bg-white overflow-hidden">
      <div className="absolute left-[485px] top-0 bottom-0 w-px bg-[#9f9f9f]" />
      <div className="absolute left-[1080px] top-0 bottom-0 w-[7px] bg-[#bfbfbf]" />
      <div className="absolute left-[537px] top-[103px] flex items-baseline text-[160px] leading-[172px] font-['Liberation_Sans',sans-serif] text-[#de2a1b] whitespace-nowrap">
        <span className="w-[84px] text-[150px] font-['Inter',sans-serif]">1</span>
        <span>+2=</span>
        <span className="text-[#e6212a]">3</span>
      </div>
      {HANDLES.map((pos) => <div key={pos} className={`absolute w-2 h-2 bg-black ${pos}`} />)}
      {NODES.map((pos) => <div key={pos} className={`absolute top-[241px] w-[6px] h-[6px] border border-black bg-white ${pos}`} />)}
      <svg className="absolute left-[534px] top-[124px] w-[460px] h-[136px]" stroke="#333" fill="none" aria-hidden="true">
        <path d="M10.500 1v10M0 12.500h8M446.500 1v10M450 12.500h8M10.500 125v10M0 122.500h8M446.500 125v10M450 122.500h8M225 64l5 5M230 64l-5 5" />
      </svg>
    </div>
  );
}

function VScroll() {
  return (
    <div className="w-[17px] shrink-0 flex flex-col bg-white">
      <button aria-label="向上" className="h-[18px] bg-[#f0f0f0] flex items-center justify-center"><Chevron dir="up" /></button>
      <div className="grow-[147]" />
      <div className="grow-[147] bg-[#cdcdcd]" />
      <div className="grow-[203]" />
      <button aria-label="向下" className="h-[18px] bg-[#f0f0f0] flex items-center justify-center"><Chevron dir="down" /></button>
    </div>
  );
}

const PageArrow = ({ flip, bar }) => (
  <svg viewBox="0 0 10 8" className={`w-[10px] h-2 ${flip ? 'rotate-180' : ''}`} aria-hidden="true">
    <path d="M9 0v8L2 4z" fill="#b4b4b4" />{bar && <path d="M0 0h1v8H0z" fill="#b4b4b4" />}
  </svg>
);

function PageBar() {
  return (
    <div className="h-[17px] shrink-0 flex">
      <div className="flex-1 min-w-0 border-t border-[#bdbdbd] flex items-center pl-[4px]">
        <button aria-label="添加页"><Icon name="pageAdd" className="w-[10px] h-[10px]" /></button>
        <button aria-label="首页" className="ml-[6px]"><PageArrow bar /></button>
        <button aria-label="上一页" className="ml-[5px]"><PageArrow /></button>
        <span className="mx-[6px] leading-[14px] text-[#b4b4b4] w-[38px] text-center whitespace-nowrap">1&nbsp; 的&nbsp; 1</span>
        <button aria-label="下一页"><PageArrow flip /></button>
        <button aria-label="末页" className="ml-[6px]"><PageArrow flip bar /></button>
        <button aria-label="在后添加页" className="ml-[6px]"><Icon name="pageAdd" className="w-[10px] h-[10px]" /></button>
        <button className="relative ml-[10px] w-12 h-4 -mt-px text-center">
          <svg viewBox="0 0 48 17" className="absolute inset-0 w-12 h-[17px]" aria-hidden="true"><path d="M0 0l5 16h38l5-16" fill="#fff" stroke="#b0b0b0" /></svg>
          <span className="relative block leading-[14px]">页 1</span>
        </button>
      </div>
      <div className="flex-1 min-w-0 flex border-l border-[#bdbdbd]">
        <button aria-label="向左" className="w-[17px] flex items-center justify-center bg-[#f0f0f0]"><Chevron dir="left" /></button>
        <div className="flex-1 bg-[#cdcdcd]" />
        <button aria-label="向右" className="w-[17px] flex items-center justify-center bg-[#f0f0f0]"><Chevron dir="right" /></button>
        <button aria-label="导航器" className="w-[17px] flex items-center justify-center bg-white"><Icon name="magnet" className="w-3 h-3" /></button>
      </div>
    </div>
  );
}

function DocPalette() {
  return (
    <div className="h-[21px] shrink-0 border-t border-[#d0d0d0] flex items-center px-[2px]">
      <div className="w-[6px] h-4 bg-[radial-gradient(#aaa_1px,transparent_1px)] bg-[size:4px_4px]" />
      <svg viewBox="0 0 4 8" className="w-1 h-2 ml-2" aria-hidden="true"><path d="M0 0l4 4-4 4z" fill="#666" /></svg>
      <button aria-label="滴管" className="ml-[11px]"><Icon name="dropper" className="w-[13px] h-[13px]" /></button>
      <Chevron dir="left" color="#c0c0c0" className="w-2 h-[10px] ml-[7px]" />
      <div className="ml-[5px] flex border border-[#555] h-[18px]">
        <button aria-label="无" className="w-4 bg-white border-r border-[#555]">
          <svg viewBox="0 0 16 16" className="w-[15px] h-4"><path d="M2 14L14 2" stroke="#e33" strokeWidth="1.200" /></svg>
        </button>
        <button aria-label="红" className="w-[17px] bg-[#de2a1b]" />
      </div>
      <div className="ml-auto flex items-center gap-2 pr-[9px]"><Chevron dir="right" color="#c4c4c4" className="w-[9px] h-[10px]" /><More /></div>
    </div>
  );
}

const LEFT_COLORS = [
  'none', '#141615', '#30302e', '#4b4b4b', '#666663', '#808080', '#979797', '#adaeb0', '#c3c4c3', '#d8d9d8', '#ebebeb',
  '#ffffff', '#3b2a95', '#00a2da', '#00a45c', '#fbe116', '#de2a1b', '#e4007f', '#ad4587', '#f07d00', '#ffb9bc', '#7c6c65',
  '#d9d3f3', '#afa3e0', '#7b95d2', '#8b72c8', '#968cb8', '#51648c', '#565069', '#6f849c', '#0090cc',
];
const RIGHT_COLORS = [
  '#add9f2', '#b5c8d6', '#8e9fa8', '#6b7780', '#3f484c', '#546c6c', '#4d8777', '#769492', '#65b09d', '#68a77a', '#80d7df',
  '#65b0bb', '#b7ccbb', '#dff9e0', '#b5f0ba', '#94a099', '#949c78', '#bdc574', '#bbc996', '#b8d700', '#e9f286', '#4c4b41',
  '#807e6f', '#b0ae99', '#ada87a', '#dacb70', '#ffeb89', '#fff3b8', '#fff9df', '#aa9070', '#cd9160',
];

function Palette() {
  return (
    <aside className="w-9 shrink-0 border-l border-[#d0d0d0] flex flex-col">
      <div className="h-12 flex flex-col items-center shrink-0">
        <div className="mt-[2px] w-8 h-[6px] bg-[radial-gradient(#aaa_1px,transparent_1px)] bg-[size:4px_4px]" />
        <svg viewBox="0 0 4 8" className="mt-[6px] w-1 h-2" aria-hidden="true"><path d="M0 0l4 4-4 4z" fill="#666" /></svg>
        <Icon name="dropperGray" className="mt-[9px] w-3 h-3" />
      </div>
      <div className="grid grid-cols-2 gap-px bg-[#595959] border border-[#595959] shrink-0">
        {LEFT_COLORS.map((c, i) => (
          <React.Fragment key={i}>
            <button
              aria-label={c}
              className={`h-4 ${c === '#de2a1b' ? 'outline outline-white relative' : ''}`}
              style={{ backgroundColor: c === 'none' ? '#ffffff' : c }}
            >
              {c === 'none' && <svg viewBox="0 0 16 16" className="w-4 h-4"><path d="M2 14L14 2" stroke="#e33" strokeWidth="1.300" /></svg>}
            </button>
            <button aria-label={RIGHT_COLORS[i]} className="h-4" style={{ backgroundColor: RIGHT_COLORS[i] }} />
          </React.Fragment>
        ))}
      </div>
      <div className="mt-[9px] h-[17px] flex items-center justify-around bg-[#f0f0f0]">
        <button aria-label="上一列"><Chevron dir="left" /></button>
        <button aria-label="下一列"><Chevron dir="right" /></button>
      </div>
    </aside>
  );
}

function StatusBar() {
  return (
    <footer className="h-[38px] shrink-0 border-t border-[#d0d0d0] flex items-center pl-1 pb-[2px] whitespace-nowrap overflow-hidden">
      <Tool name="gear" corner />
      <span className="ml-[3px] w-[877px] shrink-0">单击对象两次可旋转/倾斜；双击工具可选择所有对象；按住 Shift 键单击可选择多个对象；按住 Alt 键单击可进行挖掘；按住 Ctrl 并单击可在组中选择</span>
      <span className="w-[227px] shrink-0">美术字：&nbsp; Arial (常规) (ENU) 于 图层 1</span>
      <Icon name="fill" />
      <span className="ml-[2px] w-[22px] h-[21px] bg-[#de2a1b] border border-[#999] shrink-0" />
      <span className="ml-1 w-[156px] text-xs shrink-0">C： &nbsp;0 M： &nbsp;100 Y： &nbsp;100 K...</span>
      <Icon name="pen" />
      <svg viewBox="0 0 22 21" className="w-[22px] h-[21px] shrink-0" aria-hidden="true"><rect x=".5" y=".5" width="21" height="20" fill="#fff" stroke="#999" /><path d="M2 19L20 2" stroke="#e33" strokeWidth="1.500" /></svg>
      <span className="ml-1">无</span>
    </footer>
  );
}

/* ---------- dialog controls ---------- */

function Radio({ name, label, checked, disabled, className = '', small }) {
  return (
    <label className={`flex items-center gap-[5px] shrink-0 ${small ? "text-[11px] font-['Liberation_Sans',sans-serif]" : ''} ${disabled ? 'text-[#7f7f7f]' : ''} ${className}`}>
      <input
        type="radio"
        name={name}
        defaultChecked={checked}
        disabled={disabled}
        className="appearance-none w-[13px] h-[13px] shrink-0 rounded-full border border-[#333] bg-white checked:bg-[#333] checked:shadow-[inset_0_0_0_2px_#fff] disabled:border-[#c4c4c4] disabled:checked:bg-[#c4c4c4]"
      />
      {label}
    </label>
  );
}

function Check({ label, checked, className = '', tight }) {
  return (
    <label className={`flex items-center shrink-0 ${tight ? 'gap-[2px]' : 'gap-[5px]'} ${className}`}>
      <span className="relative w-[13px] h-[13px] shrink-0">
        <input type="checkbox" defaultChecked={checked} className="peer appearance-none block w-[13px] h-[13px] border border-[#333] bg-white" />
        <svg viewBox="0 0 13 13" className="absolute inset-0 w-[13px] h-[13px] hidden peer-checked:block pointer-events-none" fill="none" stroke="#333" strokeWidth="1.300"><path d="M2.500 6.500l3 3 5-6" /></svg>
      </span>
      {label}
    </label>
  );
}

function Spin({ label, value, disabled, className = '' }) {
  const [val, setVal] = useState(value);
  const step = value.includes('.') ? 0.1 : 1;
  const change = (d) => setVal((v) => (Number(v) + d * step).toFixed(step < 1 ? 1 : 0));
  return (
    <div className={`flex h-[21px] border shrink-0 p-px ${disabled ? 'border-[#cccccc] bg-[#f0f0f0]' : 'border-[#7a7a7a] bg-white'} ${className}`}>
      <input
        aria-label={label}
        value={val}
        disabled={disabled}
        onChange={(e) => setVal(e.target.value)}
        className="flex-1 w-0 min-w-0 text-right pr-[5px] outline-none leading-4 disabled:text-[#888]"
      />
      <div className="w-[15px] flex flex-col">
        {['up', 'down'].map((dir) => (
          <button key={dir} aria-label={`${label} ${dir}`} disabled={disabled} onClick={() => change(dir === 'up' ? 1 : -1)} className="flex-1 border border-[#b4b4b4] bg-[#f0f0f0] flex items-center justify-center">
            <svg viewBox="0 0 6 3" className={`w-[6px] h-[3px] ${dir === 'down' ? 'rotate-180' : ''}`}><path d="M3 0l3 3H0z" fill={disabled ? '#888' : '#000'} /></svg>
          </button>
        ))}
      </div>
    </div>
  );
}

function Select({ label, options, className = '', white, children }) {
  return (
    <div className={`relative shrink-0 ${className}`}>
      <select aria-label={label} className={`appearance-none block w-full h-full leading-4 border outline-none ${children ? 'pl-7' : 'pl-[3px]'} ${white ? 'bg-white border-[#7a7a7a]' : 'bg-[#e1e1e1] border-[#adadad]'}`}>
        {options.map((o) => <option key={o}>{o}</option>)}
      </select>
      {children}
      <svg viewBox="0 0 9 5" className="absolute right-1 top-1/2 -translate-y-1/2 w-[9px] h-[5px] pointer-events-none" fill="none" stroke="#555"><path d="M.5 .5l4 4 4-4" /></svg>
    </div>
  );
}

function Btn({ children, disabled, primary, className = '' }) {
  return (
    <button
      disabled={disabled}
      className={`shrink-0 whitespace-nowrap ${primary ? 'border-2 border-[#0078d7]' : 'border border-[#adadad]'} ${disabled ? 'bg-[#cccccc] text-[#8a8a8a]' : 'bg-[#e1e1e1]'} ${className}`}
    >
      {children}
    </button>
  );
}

function Group({ title, legend, className = '', children }) {
  return (
    <fieldset className={`border border-[#dcdcdc] min-w-0 ${className}`}>
      {(title || legend) && <legend className="ml-[5px] h-[14px] leading-[18px] px-[2px]">{legend || title}</legend>}
      {children}
    </fieldset>
  );
}

function DialogTitle({ title, muted }) {
  return (
    <div className="h-[30px] bg-white flex items-center pl-2 pr-[9px]">
      <Icon name="pluginArrow" />
      <h2 className={`ml-[5px] text-xs ${muted ? 'text-[#999]' : ''}`}>{title}</h2>
      <button aria-label="关闭" className="ml-auto"><svg viewBox="0 0 12 12" className="w-3 h-3" fill="none" stroke={muted ? '#999' : '#000'} strokeWidth="1.200"><path d="M1 1l10 10M11 1L1 11" /></svg></button>
    </div>
  );
}

function CornerLineDialog() {
  return (
    <section className="absolute left-[107px] top-[99px] w-[342px] border border-[#707070] bg-[#f0f0f0] pb-[3px] text-xs shadow-[2px_4px_14px_rgba(0,0,0,0.4)]">
      <DialogTitle title="拼版角线" />
      <Group title="角线" className="ml-[6px] mr-1 pb-4">
        <Group title="出血值" className="mt-[3px] ml-[10px] mr-[7px] pb-[6px]">
          <div className="flex h-5 mt-[2px] pl-1">
            {['3mm', '4mm', '5mm', '6mm', '7mm'].map((t) => <Radio key={t} small disabled name="bleed" label={t} checked={t === '3mm'} className="w-[47px]" />)}
            <Radio disabled name="bleed" label="自定义" />
          </div>
        </Group>
        <Group title="角线长度" className="mt-[2px] ml-2 mr-[9px] pb-1">
          <div className="flex h-[18px] mt-[2px] pl-1">
            {['3mm', '5mm', '7mm'].map((t) => <Radio key={t} small name="len" label={t} checked={t === '3mm'} className="w-[47px]" />)}
            <Radio small name="len" label="10mm" className="w-[53px]" />
            <Radio small name="len" label="15mm" className="w-[53px]" />
            <Radio name="len" label="自定义" />
          </div>
          <div className="flex h-[18px] pl-1">
            {['4mm', '6mm', '8mm'].map((t) => <Radio key={t} small name="len" label={t} className="w-[47px]" />)}
            <Radio small name="len" label="12mm" className="w-[53px]" />
            <Radio small name="len" label="20mm" className="w-[53px]" />
          </div>
        </Group>
        <Group title="自定义设置" className="mt-[2px] ml-[9px] mr-[9px] pb-px">
          <div className="flex flex-col gap-[2px] pt-2 pl-2">
            <div className="flex items-center gap-[3px] h-[22px]">
              <span>角线长度</span><Spin label="角线长度" value="0" disabled className="w-[45px]" />
              <span>偏移距离</span><Spin label="偏移距离" value="1.0" className="w-[45px]" />
              <span>角线宽度</span><Spin label="角线宽度" value="0.1" className="w-[45px]" />
            </div>
            <div className="flex items-center h-[21px]">
              <span className="w-[61px]">角线颜色</span>
              <Radio name="color" label="100%注册色" checked className="w-[92px]" />
              <Radio name="color" label="白色" />
            </div>
            <div className="flex items-center h-5 pl-[61px]">
              <Radio name="color" label="20%黑色" className="w-[73px]" />
              <Radio name="color" label="30%黑色" className="w-[74px]" />
              <Radio name="color" label="50%黑色" />
            </div>
          </div>
        </Group>
        <Group className="mt-2 ml-[10px] mr-2">
          <div className="flex items-center pt-2 pb-[6px] pl-2">
            <div className="grid grid-cols-[37px_40px]">
              {['上', '左', '下', '右'].map((t) => <Radio key={t} name="side" label={t} className="h-5" />)}
            </div>
            <label htmlFor="remark" className="w-[30px]">备注</label>
            <textarea id="remark" className="w-[184px] h-[37px] resize-none border border-[#7a7a7a] bg-white outline-none" />
          </div>
        </Group>
        <Group className="mt-[6px] ml-[10px] mr-2">
          <div className="flex py-2 pl-3">
            {['水平中线', '垂直中线', '水平夹刀', '垂直夹刀'].map((t) => <Check key={t} label={t} className="w-[73px] h-5" />)}
          </div>
        </Group>
        <Group
          legend={<Check label="添加套准标记" tight className="h-[14px] pr-[14px]" />}
          className="mt-[2px] ml-[9px] mr-2 pb-[6px]"
        >
          <div className="flex items-start pt-1 pl-5 leading-8">
            <span className="w-[30px]">类型</span>
            <Select label="类型" options={['']} white className="w-[71px] h-[38px]">
              <svg viewBox="0 0 30 30" className="absolute left-[5px] top-[4px] w-[30px] h-[30px] pointer-events-none" aria-hidden="true">
                <circle cx="15" cy="15" r="9" fill="#fff" stroke="#000" />
                <path d="M15 15V6a9 9 0 0 1 9 9zM15 15v9a9 9 0 0 1-9-9z" fill="#000" />
                <path d="M0 15h30M15 0v30" stroke="#000" />
              </svg>
            </Select>
            <span className="ml-3 w-[34px]">位置</span>
            <Select label="位置" options={['对象']} className="mt-[5px] w-[55px] h-[21px]" />
            <Select label="对齐" options={['居中']} className="mt-[5px] ml-[11px] w-[49px] h-[21px]" />
          </div>
        </Group>
        <Group title="角线类型" className="ml-3 mr-[30px] pb-1">
          <div className="flex h-5 mt-[2px] pl-[5px]">
            <Radio name="kind" label="常规角线" checked className="w-[73px]" />
            <Radio name="kind" label="内角线" className="w-[61px]" />
            <Radio name="kind" label="出血角线" />
          </div>
        </Group>
        <div className="flex items-center ml-[13px]">
          <Group title="刻度条" className="w-[153px] pb-2">
            <div className="flex h-5 mt-1 pl-[10px]">
              <Check label="灰度梯尺" tight className="w-[70px]" />
              <Check label="彩色色阶" tight />
            </div>
          </Group>
          <div className="flex items-center pt-2">
            <Check label="群组" className="ml-[5px]" />
            <Btn primary className="ml-[2px] w-[98px] h-[31px]">生成常规角线</Btn>
          </div>
        </div>
      </Group>
    </section>
  );
}

function RegexDialog() {
  return (
    <section className="absolute left-[1137px] top-[170px] w-[296px] border border-[#a0a0a0] bg-[#f0f0f0] pb-[11px] text-xs shadow-[2px_3px_10px_rgba(0,0,0,0.35)]">
      <DialogTitle title="文本正则处理" muted />
      <Group title="条件" className="ml-[9px] mr-1 pb-2">
        <div className="flex flex-col gap-[5px] pt-[5px] pl-2">
          <div className="flex gap-1">
            <Btn className="w-[39px] h-[21px]">数字</Btn>
            <Btn className="w-12 h-[21px]">非数字</Btn>
            <Btn className="w-14 h-[21px]">非空N个</Btn>
            <Btn className="w-16 h-[21px]">插入关键字</Btn>
            <input aria-label="关键字" className="w-[42px] h-[21px] border border-[#7a7a7a] bg-white px-1 outline-none" />
          </div>
          <div className="flex gap-1">
            <Btn className="w-[39px] h-[21px]">A-Z</Btn>
            <Btn className="w-12 h-[21px]">空格</Btn>
            <Btn className="w-14 h-[21px]">任意字符</Btn>
            <Btn disabled className="w-[62px] h-[21px]">重复N次</Btn>
            <Spin label="重复N次" value="0" className="w-[44px]" />
          </div>
          <div className="flex gap-1">
            <Btn className="w-[39px] h-[21px]">a-z</Btn>
            <Btn className="w-12 h-[21px]">换行</Btn>
            <Btn disabled className="w-16 h-[21px]">重复N-M次</Btn>
            <Spin label="最少次数" value="0" className="w-[46px] ml-[2px]" />
            <Spin label="最多次数" value="0" className="w-[44px] ml-[3px]" />
          </div>
        </div>
      </Group>
      <div className="flex items-center mt-2 pl-[15px]">
        <span className="w-[42px]">表达式</span>
        <Select label="表达式" options={['[第].*?\\r']} white className="w-[180px] h-[21px]" />
        <button aria-label="添加" className="ml-1"><svg viewBox="0 0 12 12" className="w-3 h-3" stroke="#000"><path d="M6 .5v11M.5 6h11" /></svg></button>
        <button aria-label="删除" className="ml-[6px]"><svg viewBox="0 0 12 12" className="w-3 h-3" stroke="#000"><path d="M1 6h10" /></svg></button>
      </div>
      <div className="flex items-center mt-[11px] pl-4">
        <span className="w-10">字体</span>
        <Select label="字体" options={['黑体']} white className="w-[181px] h-[22px]">
          <svg viewBox="0 0 13 13" className="absolute left-[7px] top-1 w-[13px] h-[13px] pointer-events-none" fill="none" aria-hidden="true">
            <path d="M0 1.500h7M3.500 1v9M1.500 10h4M0 12.500h12" stroke="#b98a44" strokeWidth="1.600" /><path d="M5 5h7M8.500 5v6M7 11h3.500" stroke="#3a3b80" strokeWidth="1.600" />
          </svg>
        </Select>
        <Btn className="ml-[6px] w-[30px] h-[23px]">预</Btn>
      </div>
      <div className="flex items-center mt-[8px] pl-4">
        <span className="w-[41px]">字号</span>
        <Spin label="字号" value="12" className="w-[52px]" />
        <button aria-label="颜色" className="ml-[10px] w-[46px] h-[26px] bg-[#e6212a] border border-r-[#aaa] border-b-[#aaa] border-t-white border-l-white" />
        <Btn className="ml-[15px] w-[79px] h-[27px]">操作</Btn>
      </div>
      <Group title="属性" className="mt-1 ml-2 mr-2 pb-[3px]">
        <div className="flex h-5 mt-[2px] pl-[7px]">
          <Check label="加粗" className="w-[49px]" />
          <Check label="斜体" className="w-[49px]" />
          <Check label="下划线" className="w-[61px]" />
          <Check label="上标" className="w-[49px]" />
          <Check label="下标" />
        </div>
        <div className="flex items-center h-6 mt-1 pl-[7px]">
          <Check label="改色" checked tight className="w-12" />
          <Check label="替换" tight className="w-[45px]" />
          <input aria-label="替换为" className="w-[169px] h-6 border border-[#7a7a7a] bg-white px-1 outline-none" />
        </div>
      </Group>
      <Group title="文本管理" className="mt-[2px] ml-[7px] mr-[10px] pb-[9px]">
        <div className="flex flex-wrap gap-x-2 gap-y-[6px] pt-2 pl-[19px]">
          <Btn className="w-[74px] h-[25px]">中转英标点</Btn>
          <Btn className="w-[75px] h-[25px]">删除空格</Btn>
          <Btn className="w-[75px] h-[25px]">人民币大写</Btn>
          <Btn className="w-[74px] h-[25px]">英转中标点</Btn>
          <Btn className="w-[75px] h-[25px]">删除空行</Btn>
        </div>
        <Group title="段落属性" className="mt-1 ml-[6px] mr-[10px] pb-1">
          <div className="flex items-center h-[21px] mt-[2px] pl-[14px]">
            <Check label="段前" className="w-[49px]" />
            <Check label="段后" className="w-[49px]" />
            <Check label="段行" className="w-[53px]" />
            <span className="w-[29px]">缩进</span>
            <Spin label="缩进" value="100" className="w-[52px]" />
          </div>
          <div className="flex items-center h-[21px] pl-[14px]">
            <Check label="首行" className="w-[49px]" />
            <Check label="左缩" className="w-[49px]" />
            <Check label="右缩" className="w-[53px]" />
            <span className="w-[31px]">字数</span>
            <Spin label="字数" value="2" className="w-[49px]" />
          </div>
        </Group>
        <div className="flex items-center mt-[6px] pl-[37px]">
          <Check label="正则" tight />
          <Btn className="ml-[11px] w-[68px] h-[25px]">调整</Btn>
          <Btn className="ml-[5px] w-[68px] h-[25px]">全部复位</Btn>
        </div>
      </Group>
      <Group title="文本计算" className="ml-[7px] mr-[10px] pb-[10px]">
        <div className="flex items-center mt-[6px] pl-[7px]">
          <span className="w-[52px]">小数点</span>
          <Select label="小数点" options={['整数']} className="w-[82px] h-[21px]" />
          <Check label="元" tight className="ml-[10px]" />
          <Btn primary className="ml-2 w-[82px] h-6">计算</Btn>
        </div>
      </Group>
    </section>
  );
}

const QL_ICONS = [
  'qChart', 'ps', 'qOne', 'qPicker', 'qTable', 'qTarget', 'qCursor', 'qWindow', 'qNews', 'qRe',
  'qT', 'qFlame', 'qMove', 'qSelect', 'qDoc', 'qFlower', 'qPlus', 'qUndo', 'qRocket',
];

function QlWindow() {
  return (
    <section className="absolute left-[496px] top-[263px] w-[564px] h-[57px] border border-[#ababab] bg-[#ebebeb] px-[5px]">
      <div className="flex items-center h-5 pl-1 pr-[3px]">
        <h2 className="text-xs">QL2018</h2>
        <button aria-label="关闭" className="ml-auto"><svg viewBox="0 0 12 12" className="w-3 h-3" fill="none" stroke="#000" strokeWidth="2"><path d="M1 1l10 10M11 1L1 11" /></svg></button>
      </div>
      <div className="flex">
        {QL_ICONS.map((n) => (
          <Tool key={n} name={n} corner={n === 'qFlower' || n === 'qPlus'}>
            {n === 'ps' ? <span className="text-[15px] leading-4 font-bold font-['Liberation_Serif',serif] text-[#2fa5e0]">PS</span> : undefined}
          </Tool>
        ))}
      </div>
    </section>
  );
}

function Watermark() {
  return (
    <div className="absolute right-[2px] bottom-px flex items-center gap-1">
      <svg viewBox="0 0 36 32" className="w-9 h-8" aria-hidden="true">
        <g fill="none" stroke="#d9534f">
          <path d="M2 2c7 4 8 9 7 14S7 26 4 31M34 2c-7 4-8 9-7 14s2 10 5 15" strokeWidth="4.500" />
          <path d="M9 16c5 5 13 5 18 0M8 27c5-7 15-7 20 0M18 23v9" strokeWidth="3.500" />
        </g>
      </svg>
      <div className="flex flex-col items-center">
        <span className="text-[22px] leading-6 font-bold text-[#f5a04c] [text-shadow:0_0_2px_#fff]">華印社區</span>
        <span className="text-[10px] leading-3 font-['DejaVu_Sans',sans-serif] text-[#8a8a8a]">www.52cnp.com</span>
      </div>
    </div>
  );
}

export default function App() {
  return (
    <div className="relative min-h-screen w-full flex flex-col overflow-hidden bg-[#ebebeb] text-black text-[13px] leading-4 font-['Noto_Sans_CJK_SC',sans-serif]">
      <Header />
      <StandardBar />
      <PropertyBar />
      <SkyBar />
      <YgBar />
      <MirrorBar />

      <main className="flex-1 flex">
        <Toolbox />
        <div className="flex-1 min-w-0 flex flex-col">
          {/* Document tabs */}
          <div className="h-[22px] shrink-0 flex bg-[#e1e1e1] border-b border-[#1296db]">
            <button aria-label="欢迎屏幕" className="w-5 bg-[#c6c6c6] flex items-center justify-center"><Icon name="home" /></button>
            <button className="px-[10px] bg-[#cce0ff]">未命名 -1*</button>
          </div>
          <div className="h-[17px] shrink-0 flex">
            <div className="w-[17px] shrink-0 bg-white flex items-center justify-center"><Icon name="rulerOrigin" className="w-[10px] h-[10px]" /></div>
            <HorizontalRuler />
          </div>
          <div className="flex-1 flex">
            <VerticalRuler />
            <div className="flex-1 min-w-0 flex flex-col">
              <div className="flex-1 flex">
                <Artboard />
                <VScroll />
              </div>
              <PageBar />
            </div>
          </div>
          <DocPalette />
        </div>
        <Palette />
      </main>

      <StatusBar />
      <CornerLineDialog />
      <QlWindow />
      <RegexDialog />
      <Watermark />
    </div>
  );
}
